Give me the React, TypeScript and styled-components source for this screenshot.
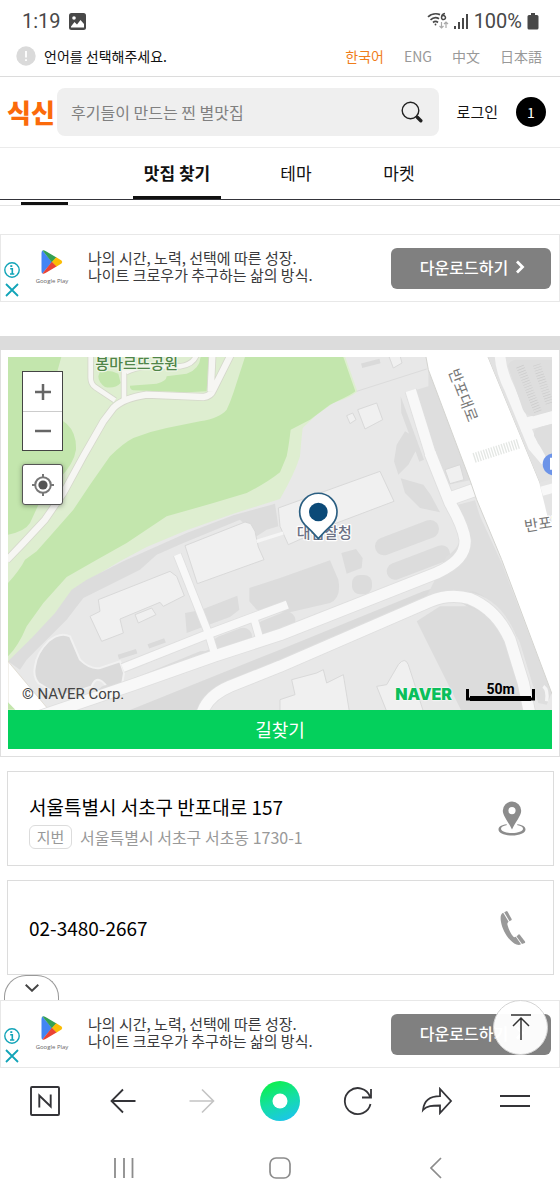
import React from "react";
import styled, { createGlobalStyle } from "styled-components";

const GlobalStyle = createGlobalStyle`
  *, *::before, *::after { box-sizing: border-box; }
  body {
    margin: 0;
    background: #fff;
    color: #111;
    font-family: "Noto Sans CJK KR", sans-serif;
  }
  button, input { font: inherit; color: inherit; margin: 0; padding: 0; border: 0; background: none; }
  a { color: inherit; text-decoration: none; }
  svg { display: block; }
`;

const Page = styled.div`
  min-height: 100vh;
  display: flex;
  flex-direction: column;
  overflow: hidden;
`;

/* phone status bar */

const StatusBar = styled.div`
  height: 40px;
  padding: 2px 21px 0 22px;
  display: flex;
  align-items: center;
  gap: 8px;
  color: #484848;
  font-family: Roboto, sans-serif;
  font-size: 20px;
  line-height: 24px;
`;

const StatusEnd = styled.div`
  margin-left: auto;
  display: flex;
  align-items: center;
  gap: 5px;
`;

/* language picker */

const LanguageBar = styled.div`
  height: 37px;
  padding: 0 18px 5px 16px;
  display: flex;
  align-items: center;
  border-bottom: 1px solid #dcdcdc;
  font-size: 14px;
  line-height: 20px;
`;

const Notice = styled.p`
  margin: 0 auto 0 8px;
`;

const LanguageList = styled.div`
  display: flex;
  gap: 20px;
`;

const LanguageButton = styled.button<{ $active?: boolean }>`
  color: ${(p) => (p.$active ? "#f07d1a" : "#999")};
`;

/* header */

const Header = styled.header`
  height: 71px;
  padding: 0 14px 0 7px;
  display: flex;
  align-items: center;
  border-bottom: 1px solid #ebebeb;
`;

const Logo = styled.a`
  width: 50px;
  color: #fb6a0b;
  font-size: 26px;
  font-weight: 900;
  line-height: 32px;
`;

const SearchForm = styled.form`
  flex: 1;
  min-width: 0;
  height: 48px;
  padding: 0 16px 0 14px;
  display: flex;
  align-items: center;
  border-radius: 8px;
  background: #efefef;
`;

const SearchInput = styled.input`
  flex: 1;
  min-width: 0;
  font-size: 16px;
  line-height: 24px;
  outline: none;
  &::placeholder { color: #808080; opacity: 1; }
`;

const LoginLink = styled.a`
  margin: 0 18px;
  font-size: 15px;
  line-height: 24px;
`;

const CountBadge = styled.button`
  width: 30px;
  height: 30px;
  border-radius: 50%;
  background: #000;
  color: #fff;
  font-size: 14px;
  line-height: 30px;
`;

/* tabs */

const Tabs = styled.nav`
  height: 52px;
  display: flex;
  justify-content: center;
  gap: 47px;
  border-bottom: 1px solid #34343a;
`;

const Tab = styled.a<{ $active?: boolean }>`
  min-width: ${(p) => (p.$active ? 88 : 56)}px;
  padding-top: 2px;
  text-align: center;
  font-size: 17px;
  font-weight: ${(p) => (p.$active ? 700 : 400)};
  line-height: 46px;
  border-bottom: 3px solid ${(p) => (p.$active ? "#111" : "transparent")};
`;

const SubStrip = styled.div`
  height: 6px;
  padding: 2px 0 0 21px;
  border-bottom: 1px solid #e4e4e4;
`;

const SubMark = styled.div`
  width: 47px;
  height: 3px;
  background: #111;
`;

/* advert */

const AdBox = styled.aside<{ $top?: number }>`
  position: relative;
  height: 68px;
  margin-top: ${(p) => p.$top || 0}px;
  padding: 0 8px 0 3px;
  display: flex;
  align-items: center;
  border: 1px solid #e8e8e8;
`;

const AdMarks = styled.div`
  align-self: flex-end;
  display: flex;
  flex-direction: column;
  gap: 4px;
  width: 16px;
  padding-bottom: 3px;
`;

const Store = styled.div`
  width: 46px;
  margin-left: 9px;
  display: flex;
  flex-direction: column;
  align-items: center;
  gap: 2px;
  color: #666;
  font-family: "Open Sans", sans-serif;
  font-size: 6px;
  line-height: 10px;
  white-space: nowrap;
`;

const AdCopy = styled.p`
  flex: 1;
  min-width: 0;
  margin: 0 0 5px 13px;
  color: #3a3a3c;
  font-size: 15px;
  line-height: 17px;
`;

const AdButton = styled.button`
  width: 160px;
  height: 41px;
  padding: 0 0 2px 4px;
  display: flex;
  align-items: center;
  justify-content: center;
  gap: 6px;
  border-radius: 6px;
  background: #808080;
  color: #fff;
  font-size: 16px;
  font-weight: 500;
  line-height: 24px;
`;

const Divider = styled.div`
  height: 14px;
  margin-top: 34px;
  background: #dcdcdc;
`;

/* map */

const MapCard = styled.section`
  padding: 7px 7px 7px;
  border: 1px solid #dfdfdf;
  border-top: 0;
`;

const MapView = styled.div`
  position: relative;
  height: 353px;
  overflow: hidden;
`;

const MapControls = styled.div`
  position: absolute;
  top: 14px;
  left: 14px;
  width: 41px;
  display: flex;
  flex-direction: column;
  gap: 13px;
`;

const ZoomGroup = styled.div`
  display: flex;
  flex-direction: column;
  border: 1px solid #444;
  background: #fff;
`;

const MapButton = styled.button<{ $single?: boolean }>`
  height: ${(p) => (p.$single ? 41 : 39)}px;
  display: flex;
  align-items: center;
  justify-content: center;
  background: #fff;
  border: ${(p) => (p.$single ? "1px solid #555" : "0")};
  border-radius: ${(p) => (p.$single ? 3 : 0)}px;
  box-shadow: ${(p) => (p.$single ? "0 1px 5px rgba(0, 0, 0, 0.35)" : "none")};
  & + & { border-top: 1px solid #ccc; }
`;

const MapFooter = styled.div`
  position: absolute;
  left: 14px;
  right: 17px;
  bottom: 5px;
  display: flex;
  align-items: flex-end;
  font-family: Roboto, sans-serif;
`;

const Copyright = styled.span`
  margin-right: auto;
  color: #444;
  font-size: 15px;
  line-height: 22px;
`;

const NaverMark = styled.span`
  margin-right: 14px;
  color: #0bbf5b;
  font-family: Inter, sans-serif;
  font-size: 16px;
  font-weight: 900;
  line-height: 22px;
  text-shadow: 0 0 2px #fff, 0 0 2px #fff;
`;

const ScaleBar = styled.span`
  width: 69px;
  margin-bottom: 4px;
  display: flex;
  flex-direction: column;
  align-items: center;
  color: #000;
  font-size: 14px;
  font-weight: 700;
  line-height: 14px;
`;

const ScaleRule = styled.svg`
  margin-top: -7px;
`;

const RouteButton = styled.button`
  display: block;
  width: 100%;
  height: 39px;
  background: #04d05c;
  color: #fff;
  font-size: 18px;
  line-height: 39px;
`;

/* contact cards */

const InfoCard = styled.a`
  height: 95px;
  margin: 14px 6px 0 7px;
  padding: 0 26px 0 21px;
  display: flex;
  align-items: center;
  justify-content: space-between;
  border: 1px solid #dcdcdc;
`;

const Address = styled.div`
  padding-top: 4px;
`;

const Primary = styled.div`
  color: #000;
  font-size: 19px;
  line-height: 28px;
`;

const Secondary = styled.div`
  margin-top: 4px;
  display: flex;
  align-items: center;
  gap: 8px;
  color: #999;
  font-size: 16px;
  line-height: 24px;
`;

const Chip = styled.span`
  width: 43px;
  border: 1px solid #dcdcdc;
  border-radius: 6px;
  text-align: center;
  font-size: 15px;
  line-height: 22px;
`;

const HandleRow = styled.div`
  display: flex;
  height: 25px;
  padding-left: 4px;
`;

const Handle = styled.button`
  width: 55px;
  padding-bottom: 1px;
  display: flex;
  align-items: center;
  justify-content: center;
  border: 1px solid #999;
  border-bottom: 0;
  border-radius: 22px 22px 0 0;
`;

const TopButton = styled.button`
  position: absolute;
  top: -1px;
  right: 11px;
  width: 55px;
  height: 55px;
  padding-bottom: 2px;
  display: flex;
  align-items: center;
  justify-content: center;
  border: 1px solid #d4d4d4;
  border-radius: 50%;
  background: rgba(255, 255, 255, 0.97);
`;

/* bottom bars */

const BrowserBar = styled.nav`
  height: 68px;
  padding: 0 6px 2px;
  display: grid;
  grid-template-columns: repeat(7, 1fr);
`;

const SystemBar = styled.nav`
  height: 64px;
  padding: 0 46px;
  display: grid;
  grid-template-columns: repeat(3, 1fr);
`;

const BarButton = styled.button`
  display: flex;
  align-items: center;
  justify-content: center;
`;

const PictureIcon = () => (
  <svg width="17" height="17" viewBox="0 0 17 17">
    <rect width="17" height="17" rx="2.5" fill="#484848" />
    <circle cx="5" cy="5" r="1.8" fill="#fff" />
    <path d="M2 13.500 5.500 9 8 11.500 11.500 7 15 11V14.500H2Z" fill="#fff" />
  </svg>
);

const WifiIcon = () => (
  <svg width="22" height="18" viewBox="0 0 22 18" fill="none" stroke="#484848" strokeWidth="1.7">
    <path d="M1 4.800C4 2 9 1 13 2.600" />
    <path d="M3.500 7.800C6 5.500 9.500 5 12 6.800" />
    <path d="M6 10.500C7.500 9.200 9.500 9.200 11 10.500" />
    <circle cx="8.500" cy="12.500" r="0.900" fill="#484848" stroke="none" />
    <path d="M18 1.500C15 2 14.500 4 14.500 5.500A2 2 0 1 0 16.500 3.600C15.500 3.600 14.500 4.500 14.500 5.500" strokeWidth="1.500" />
    <path d="M14.500 10V16M12.500 14 14.500 16 16.500 14M19 16V10M17 12 19 10 21 12" stroke="#aaa" strokeWidth="1.200" />
  </svg>
);

const SignalIcon = () => (
  <svg width="15" height="17" viewBox="0 0 15 17" fill="#484848">
    <rect y="13" width="2" height="3" />
    <rect x="4" y="9" width="2" height="7" />
    <rect x="8" y="5" width="2" height="11" />
    <rect x="12" y="1" width="2" height="15" />
  </svg>
);

const BatteryIcon = () => (
  <svg width="12" height="17" viewBox="0 0 12 17" fill="#484848">
    <path d="M4 0H8V2H10Q11.500 2 11.500 3.500V15Q11.500 16.500 10 16.500H2Q.5 16.500 .5 15V3.500Q.5 2 2 2H4Z" />
  </svg>
);

const NoticeIcon = () => (
  <svg width="20" height="20" viewBox="0 0 20 20">
    <circle cx="10" cy="10" r="9.700" fill="#dadada" />
    <path d="M10 5V11.500M10 13.200V15" stroke="#fff" strokeWidth="1.800" />
  </svg>
);

const SearchIcon = () => (
  <svg width="22" height="22" viewBox="0 0 22 22" fill="none" stroke="#222">
    <circle cx="9.500" cy="9.500" r="8.300" strokeWidth="1.400" />
    <path d="M15.200 15.200 16.500 16.500" strokeWidth="1.600" />
    <path d="M16.300 16.300 19.800 19.800" strokeWidth="3.400" strokeLinecap="round" />
  </svg>
);

const PlayLogo = () => (
  <svg width="22" height="24" viewBox="0 0 22 24">
    <path d="M1.500.5Q.5 1 .5 3V21Q.5 23 1.500 23.500L11 12Z" fill="#4285f4" />
    <path d="M1.500.5Q2.500-.2 4.500 1L15.500 7.500 11 12.500Z" fill="#34a053" />
    <path d="M15.200 7.300 20.500 10.500Q22 12 20.500 13.500L15.200 16.700 10.800 12Z" fill="#fbbc04" />
    <path d="M1.500 23.500Q2.500 24.200 4.500 23L15.500 16.500 10.800 11.800Z" fill="#ea4335" />
  </svg>
);

const InfoIcon = () => (
  <svg width="16" height="16" viewBox="0 0 16 16" fill="none" stroke="#12a4b8">
    <circle cx="8" cy="8" r="7.200" strokeWidth="1.400" />
    <path d="M6.200 6.800H8.300V12M6 12H10.300" strokeWidth="1.600" />
    <path d="M7.300 3.200V5" strokeWidth="2" />
  </svg>
);

const CloseIcon = () => (
  <svg width="16" height="16" viewBox="0 0 16 16" stroke="#12a4b8" strokeWidth="1.800">
    <path d="M2 2 14 14M14 2 2 14" />
  </svg>
);

const ChevronIcon = () => (
  <svg width="12" height="14" viewBox="0 0 12 14" fill="none" stroke="#fff" strokeWidth="2.800">
    <path d="M3 1.500 8.500 7 3 12.500" />
  </svg>
);

const Advert = ({ top, children }: { top?: number; children?: React.ReactNode }) => (
  <AdBox $top={top}>
    <AdMarks>
      <InfoIcon />
      <CloseIcon />
    </AdMarks>
    <Store>
      <PlayLogo />
      Google Play
    </Store>
    <AdCopy>
      나의 시간, 노력, 선택에 따른 성장.
      <br />
      나이트 크로우가 추구하는 삶의 방식.
    </AdCopy>
    <AdButton type="button">
      다운로드하기
      <ChevronIcon />
    </AdButton>
    {children}
  </AdBox>
);

const MAP_FONT = '"Noto Sans CJK KR", sans-serif';

/* Map tile, drawn at three units to the pixel. */
const MapDrawing = () => (
  <svg width="100%" height="353" viewBox="24 22 1632 1059" preserveAspectRatio="xMidYMid slice">
    <rect x="0" y="0" width="1700" height="1100" fill="#e8e8e8" />

    {/* park */}
    <path d="M0 0H1028L1072 125Q1060 140 1000 160L950 195 908 235Q902 290 900 320 885 370 840 448L700 492 560 542 440 592 360 635 250 700 200 760 130 850 60 920 24 940H0Z" fill="#deeed0" />
    <path d="M735 22 1030 22 1066 125Q1050 138 990 165L930 210 872 240Q866 290 860 320L840 368Q800 400 740 430L640 460 500 500 380 580 280 636 200 682 130 760 80 830Q55 890 24 920V700Q60 660 75 630L110 605 150 560 220 480 270 405 330 320Q370 280 400 265 450 245 500 235L600 215Q660 205 680 180 690 160 700 130Z" fill="#c3e6ad" />
    <path d="M0 0H190L165 90 160 200Q185 210 200 222 230 250 228 300 222 340 180 385L120 455 90 520Q75 545 24 555H0Z" fill="#c3e6ad" />
    <path d="M300 65Q330 60 355 72L362 100Q345 118 315 112 295 98 295 80ZM390 108 470 102Q500 95 500 80L560 72Q598 60 602 22H626L620 125 560 128 400 122Q388 118 390 108Z" fill="#c3e6ad" />
    {["#d5d8cb", "#f6f6f3"].map((stroke, i) => (
      <g key={stroke} fill="none" stroke={stroke} strokeWidth={i ? 19 : 24}>
        <path d="M272 0V85Q272 102 285 112L345 152M372 60V150M378 68Q400 55 440 50H540Q580 45 590 15" strokeWidth={i ? 14 : 19} />
        <path d="M20 632 70 580 135 510 190 430 250 320 310 215 340 175Q370 145 440 135L610 142Q632 140 640 120L700 0M638 0 632 125" />
      </g>
    ))}

    {/* edge roads and planting */}
    <path d="M24 935 95 865 165 790 215 720 260 690 370 635 560 550 700 497 790 472 825 462 835 530 800 540 770 560 720 510 550 580 470 615 420 660 300 720 250 745 200 810 130 880 80 930 60 960Z" fill="#dcdcdc" />
    <path d="M105 950Q110 910 145 875 180 845 210 860L240 930Q270 960 300 955L360 935 372 970 362 1030 320 1010Q290 970 275 1010L180 1040 115 1000Q98 980 105 950Z" fill="#dadada" stroke="#f1f1f1" strokeWidth="6" />
    <path d="M24 935 150 1085H24Z" fill="#fff" stroke="#d8d2c4" strokeWidth="2" />
    <path d="M24 1058 46 1080H24Z" fill="#c3e6ad" />
    <path d="M555 790 600 782 712 738 718 780 690 802 600 835 560 850ZM748 715 840 685 990 632 1015 690Q1025 745 990 760L860 790 770 780 748 755ZM1024 610 1068 598 1088 625 1085 655 1040 672Z" fill="#dcdcdc" />
    <rect x="1056" y="676" width="60" height="58" rx="24" fill="#dcdcdc" />
    <path d="M1215 245 1240 260 1252 295 1225 345 1195 375 1182 335 1190 285ZM1202 386 1270 405 1292 435 1320 488 1260 475 1215 430ZM390 990 640 895 620 930 400 1005ZM1202 140 1272 330 1258 336 1204 190Z" fill="#dcdcdc" />
    <g fill="none" stroke="#dcdcdc" strokeLinecap="round">
      <path d="M1152 590 1290 538" strokeWidth="54" />
      <path d="M1185 665 1325 612" strokeWidth="50" />
      <path d="M665 885 730 860M795 838 860 812" strokeWidth="52" />
      <path d="M300 1030Q320 1000 340 1030" strokeWidth="18" />
    </g>
    <path d="M380 995 600 905Q630 900 630 925L620 932 400 1015 384 1010Z" fill="#dcdcdc" />
    <path d="M380 1085 840 900 1270 725Q1400 680 1480 740L1550 850 1590 1080H1500L1450 830Q1400 740 1330 755L860 950 660 1040 600 1085Z" fill="#dadada" />
    <path d="M1340 620Q1400 580 1382 505L1440 500 1505 640 1655 1030 1640 1065 1615 1060 1560 880Q1510 760 1420 725L1280 740Z" fill="#dedede" />
    <path d="M1375 465 1425 452 1440 500 1400 580Z" fill="#dedede" />
    <path d="M1250 815 1320 770H1400Q1480 790 1530 900L1580 1085H1385Z" fill="#dcdcdc" />
    <path d="M1590 1085 1550 890Q1500 750 1400 738" fill="none" stroke="#e6e6e6" strokeWidth="22" />
    <path d="M1245 122 1285 110 1285 60 1410 392 1345 405 1300 300Z" fill="#dedede" />

    {/* buildings */}
    <g fill="#f0f0f0" stroke="#d9d9d9" strokeWidth="3">
      <path d="M555 588 735 517 752 522 765 545 775 592 792 630 592 702Z" />
      <path d="M295 750 510 665 530 680 553 738 490 770 480 758 360 808 370 850 305 875 270 800 300 785Z" />
      <path d="M405 795 455 775 468 795 415 820Z" />
      <path d="M835 475 1140 365 1182 455 1010 520 865 585 840 530Z" />
      <path d="M1073 180 1130 160 1148 210 1095 238ZM1040 198 1058 190 1068 210 1050 222ZM1163 10 1198 10 1206 40 1180 55ZM1335 360 1380 345 1392 390 1350 402Z" />
      <path d="M840 1085V1050L885 1035 875 990 950 970 970 960 980 1000 1030 975 1048 1085ZM1130 1010 1160 1005 1195 945Q1215 920 1225 945L1270 1085H1160Z" />
    </g>

    {/* inner drives */}
    {["#dfdfdf", "#f8f8f8"].map((stroke, i) => (
      <g key={stroke} fill="none" stroke={stroke} strokeWidth={i ? 34 : 39} strokeLinejoin="round">
        <path d="M120 1100 400 1005 640 920 840 855 1310 670Q1400 630 1395 570 1390 530 1350 460L1290 310" />
        <path d="M368 955 620 855 862 765" strokeWidth={i ? 25 : 30} />
        <path d="M605 1095Q620 1040 690 1010L840 950 1290 755Q1350 730 1410 747 1490 780 1530 870L1570 1000 1590 1095" />
        <path d="M532 615 625 850 645 915M760 800 780 870" strokeWidth={i ? 22 : 27} />
        <path d="M1232 122 1292 315" strokeWidth={i ? 32 : 37} />
        <path d="M1340 450 1425 420" strokeWidth={i ? 38 : 43} />
      </g>
    ))}
    <path d="M770 575 850 550" stroke="#f5f5f5" strokeWidth="10" />
    <path d="M1070 125 1280 58" stroke="#dcdcdc" strokeWidth="3" />
    <path d="M1085 48 1140 34M355 922 410 905M445 890 495 872" stroke="#dadada" strokeWidth="14" />

    {/* main avenue */}
    <path d="M1274 0 1285 60 1410 392 1430 450 1505 630 1655 1030 1680 1085V500L1620 400 1455 0Z" fill="#fff" stroke="#d4d4d0" strokeWidth="3" />
    <path d="M1455 0 1620 400 1660 390V0Z" fill="#e2e2e2" />
    <g fill="none" stroke="#f6f6f6">
      <path d="M1500 10Q1500 60 1530 120L1600 290 1660 360" strokeWidth="32" />
      <path d="M1560 228 1660 202" strokeWidth="38" />
    </g>
    <path d="M1524 50Q1528 30 1550 30H1670V180L1600 200Q1575 198 1568 178ZM1602 258Q1600 238 1620 232L1670 218V330L1640 325Z" fill="#dedede" />
    <path d="M1560 50 1615 190M1610 45 1650 165" stroke="#ccc" strokeWidth="24" strokeDasharray="2 6" />
    <path d="M1618 400 1660 385V520L1645 510Z" fill="#e4e4e4" />
    <path d="M1625 425 1660 415" stroke="#f8f8f8" strokeWidth="28" />
    <path d="M1422 325 1556 282" stroke="#e4e7e4" strokeWidth="30" strokeDasharray="4 4" />
    <path d="M1630 1010Q1645 1020 1640 1055" stroke="#f5f5f5" strokeWidth="10" fill="none" />
    <circle cx="1661" cy="344" r="33" fill="#6d94e8" />
    <path d="M1654 360V328H1675" fill="none" stroke="#fff" strokeWidth="8" />

    {/* place names */}
    <g fontFamily={MAP_FONT} fontSize="45" fontWeight="500" stroke="#fff" strokeWidth="7" paintOrder="stroke" strokeLinejoin="round">
      <text x="286" y="58" fill="#4f8548" stroke="#edf5e5">봉마르뜨공원</text>
      <text x="890" y="566" fill="#6d7285">대검찰청</text>
      <text transform="translate(1345 65) rotate(69)" fill="#777" fontWeight="400">반포대로</text>
      <text transform="translate(1576 546) rotate(-9)" fill="#777" fontWeight="400">반포대로</text>
    </g>

    {/* selected place */}
    <path d="M955 567Q936 545 914 525A56 56 0 1 1 996 525Q974 545 955 567Z" fill="#fff" stroke="#2b5f82" strokeWidth="5" />
    <circle cx="955" cy="487" r="28" fill="#0b4a78" />
  </svg>
);

export default function App() {
  return (
    <Page>
      <GlobalStyle />
      <StatusBar>
        <span>1:19</span>
        <PictureIcon />
        <StatusEnd>
          <WifiIcon />
          <SignalIcon />
          <span>100%</span>
          <BatteryIcon />
        </StatusEnd>
      </StatusBar>

      <LanguageBar>
        <NoticeIcon />
        <Notice>언어를 선택해주세요.</Notice>
        <LanguageList>
          <LanguageButton type="button" $active>한국어</LanguageButton>
          <LanguageButton type="button">ENG</LanguageButton>
          <LanguageButton type="button">中文</LanguageButton>
          <LanguageButton type="button">日本語</LanguageButton>
        </LanguageList>
      </LanguageBar>

      <Header>
        <Logo href="#home">식신</Logo>
        <SearchForm role="search">
          <SearchInput type="text" aria-label="검색" placeholder="후기들이 만드는 찐 별맛집" />
          <button type="button" aria-label="검색">
            <SearchIcon />
          </button>
        </SearchForm>
        <LoginLink href="#login">로그인</LoginLink>
        <CountBadge type="button">1</CountBadge>
      </Header>

      <Tabs>
        <Tab href="#find" $active>맛집 찾기</Tab>
        <Tab href="#theme">테마</Tab>
        <Tab href="#market">마켓</Tab>
      </Tabs>
      <SubStrip>
        <SubMark />
      </SubStrip>

      <Advert top={28} />
      <Divider />

      <MapCard>
        <MapView>
          <MapDrawing />
          <MapControls>
            <ZoomGroup>
              <MapButton type="button" aria-label="확대">
                <svg width="18" height="18" viewBox="0 0 18 18" stroke="#666" strokeWidth="2.500">
                  <path d="M1 9H17M9 1V17" />
                </svg>
              </MapButton>
              <MapButton type="button" aria-label="축소">
                <svg width="18" height="18" viewBox="0 0 18 18" stroke="#666" strokeWidth="2.500">
                  <path d="M1 9H17" />
                </svg>
              </MapButton>
            </ZoomGroup>
            <MapButton type="button" $single aria-label="내 위치">
              <svg width="22" height="22" viewBox="0 0 22 22" fill="none" stroke="#777" strokeWidth="2">
                <circle cx="11" cy="11" r="7.800" />
                <circle cx="11" cy="11" r="4.600" fill="#555" stroke="none" />
                <path d="M11 0V4M11 18V22M0 11H4M18 11H22" />
              </svg>
            </MapButton>
          </MapControls>
          <MapFooter>
            <Copyright>© NAVER Corp.</Copyright>
            <NaverMark>NAVER</NaverMark>
            <ScaleBar>
              50m
              <ScaleRule width="69" height="12" viewBox="0 0 69 12">
                <path d="M1.500 0V10H67.500V0" fill="none" stroke="#000" strokeWidth="3" />
                <path d="M4 9.500H65" stroke="#000" strokeWidth="5" />
              </ScaleRule>
            </ScaleBar>
          </MapFooter>
        </MapView>
        <RouteButton type="button">길찾기</RouteButton>
      </MapCard>

      <InfoCard href="#address">
        <Address>
          <Primary>서울특별시 서초구 반포대로 157</Primary>
          <Secondary>
            <Chip>지번</Chip>
            서울특별시 서초구 서초동 1730-1
          </Secondary>
        </Address>
        <svg width="30" height="36" viewBox="0 0 30 36" fill="#8c8c8c">
          <path fillRule="evenodd" d="M15 .5A9.200 9.200 0 0 1 24.200 9.700C24.200 14.500 18.500 21 15 28.500 11.500 21 5.800 14.500 5.800 9.700A9.200 9.200 0 0 1 15 .5ZM15 6A3.600 3.600 0 1 0 15 13.200 3.600 3.600 0 0 0 15 6Z" />
          <path d="M9.500 23.300C4.500 24 1.500 25.800 1.500 28.500 1.500 32 7.500 34.500 15 34.500S28.500 32 28.500 28.500C28.500 25.800 25.500 24 20.500 23.300L20 24C24 24.700 26 26 26 27.800 26 30.500 21 32 15 32S4 30.500 4 27.800C4 26 6 24.700 10 24Z" />
        </svg>
      </InfoCard>

      <InfoCard href="tel:02-3480-2667">
        <Primary>02-3480-2667</Primary>
        <svg width="30" height="36" viewBox="0 0 30 36" fill="#999">
          <path d="M6.200 2.800C3.500 4 3.200 7 4 12 5.500 21 12.500 32 19.500 34.500 21.500 35.200 23 34.900 24 34.300L18.800 26.800C17.500 27.500 16.800 27.300 16 26.300 13.500 23.200 11.500 19 10.500 15 10.200 13.500 10.500 12.500 11.600 11.700Z" />
          <path d="M7.200 2.200 9.300 1.200Q10 .9 10.500 1.600L14.500 8.800Q15 9.700 14.300 10.200L12.500 11.300Z" />
          <path d="M19.500 26.500 21.500 24.500Q22.200 24 22.800 24.700L28 31.500Q28.600 32.300 27.800 32.900L25 34Z" />
        </svg>
      </InfoCard>

      <HandleRow>
        <Handle type="button" aria-label="펼치기">
          <svg width="14" height="8" viewBox="0 0 14 8" fill="none" stroke="#444" strokeWidth="1.900">
            <path d="M.7.8 7 6.800 13.300.8" />
          </svg>
        </Handle>
      </HandleRow>

      <Advert>
        <TopButton type="button" aria-label="맨 위로">
          <svg width="22" height="28" viewBox="0 0 22 28" fill="none" stroke="#333" strokeWidth="1.500">
            <path d="M1 2H21M11 5V27M3 13 11 5 19 13" />
          </svg>
        </TopButton>
      </Advert>

      <BrowserBar>
        <BarButton type="button" aria-label="네이버 홈">
          <svg width="32" height="32" viewBox="0 0 32 32" fill="none" stroke="#343438" strokeWidth="1.900">
            <rect x="2" y="2" width="28" height="28" rx="1" />
            <path d="M10.300 22.500V10.500L21.700 21.500V9.500" />
          </svg>
        </BarButton>
        <BarButton type="button" aria-label="뒤로">
          <svg width="26" height="26" viewBox="0 0 26 26" fill="none" stroke="#343438" strokeWidth="1.800">
            <path d="M25.500 13H1.500M13 1.500 1.500 13 13 24.500" />
          </svg>
        </BarButton>
        <BarButton type="button" aria-label="앞으로">
          <svg width="26" height="26" viewBox="0 0 26 26" fill="none" stroke="#c4c4c4" strokeWidth="1.600">
            <path d="M.5 13H24.500M13 1.500 24.500 13 13 24.500" />
          </svg>
        </BarButton>
        <BarButton type="button" aria-label="그린닷">
          <svg width="40" height="40" viewBox="0 0 40 40">
            <defs>
              <linearGradient id="dot" x1="0.3" y1="0" x2="0.7" y2="1">
                <stop offset="0" stopColor="#0df04a" />
                <stop offset="0.5" stopColor="#14dfa4" />
                <stop offset="1" stopColor="#1cc4ec" />
              </linearGradient>
            </defs>
            <circle cx="20" cy="20" r="20" fill="url(#dot)" />
            <circle cx="20" cy="20" r="7.500" fill="#fff" />
          </svg>
        </BarButton>
        <BarButton type="button" aria-label="새로고침">
          <svg width="30" height="30" viewBox="0 0 30 30" fill="none" stroke="#343438" strokeWidth="1.800">
            <path d="M27.500 18A13 13 0 1 1 27 10.500M28 3V11.500H19" />
          </svg>
        </BarButton>
        <BarButton type="button" aria-label="공유">
          <svg width="32" height="28" viewBox="0 0 32 28" fill="none" stroke="#343438" strokeWidth="1.800">
            <path d="M2 23C3 13 9 9.200 19 9.200V2L30 14 19 26V18.500C11 18.500 6 18.500 2 23Z" />
          </svg>
        </BarButton>
        <BarButton type="button" aria-label="메뉴">
          <svg width="30" height="14" viewBox="0 0 30 14" stroke="#343438" strokeWidth="2">
            <path d="M0 2H30M0 12H30" />
          </svg>
        </BarButton>
      </BrowserBar>

      <SystemBar>
        <BarButton type="button" aria-label="최근 앱">
          <svg width="20" height="22" viewBox="0 0 20 22" stroke="#8c8c8c" strokeWidth="1.800">
            <path d="M1 1V21M10 1V21M18.500 1V21" />
          </svg>
        </BarButton>
        <BarButton type="button" aria-label="홈">
          <svg width="22" height="22" viewBox="0 0 22 22" fill="none" stroke="#8c8c8c" strokeWidth="1.700">
            <rect x="1" y="1" width="20" height="20" rx="6" />
          </svg>
        </BarButton>
        <BarButton type="button" aria-label="뒤로 가기">
          <svg width="12" height="22" viewBox="0 0 12 22" fill="none" stroke="#8c8c8c" strokeWidth="1.700">
            <path d="M11 1 1 11 11 21" />
          </svg>
        </BarButton>
      </SystemBar>
    </Page>
  );
}
